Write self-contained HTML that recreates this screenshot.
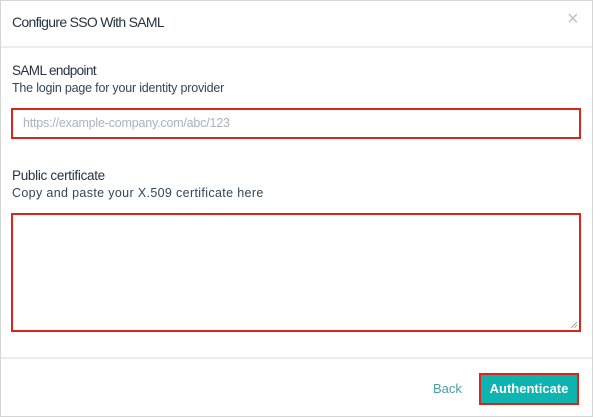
<!DOCTYPE html>
<html><head><style>
body{margin:0;width:593px;height:417px;background:#fff;font-family:"Liberation Sans",sans-serif;position:relative;overflow:hidden}
.frame{position:absolute;left:0;top:0;width:591px;height:415px;border:1px solid #d6d6d6}
.t{position:absolute;white-space:nowrap}
.line{position:absolute;left:1px;width:591px;height:2px;background:#ececec}
.box{position:absolute;border:2px solid #d8261c;box-sizing:border-box;background:#fff}
</style></head><body>
<div class="frame"></div>
<div class="t" style="left:12px;top:14px;font-size:14px;letter-spacing:-0.7px;color:#253342">Configure SSO With SAML</div>
<div class="t" style="left:567px;top:8px;font-size:20px;color:#b8c4cf">×</div>
<div class="line" style="top:46px"></div>
<div class="t" style="left:12px;top:63px;font-size:13.5px;letter-spacing:-0.6px;color:#253342">SAML endpoint</div>
<div class="t" style="left:12px;top:81px;font-size:12.5px;letter-spacing:-0.2px;color:#33475b">The login page for your identity provider</div>
<div class="box" style="left:11px;top:108px;width:570px;height:31px"></div>
<div class="t" style="left:23px;top:116px;font-size:12.5px;letter-spacing:-0.2px;color:#a9b3bd">https://example-company.com/abc/123</div>
<div class="t" style="left:12px;top:168px;font-size:13.5px;letter-spacing:-0.3px;color:#253342">Public certificate</div>
<div class="t" style="left:12px;top:186px;font-size:12.5px;letter-spacing:0.35px;color:#33475b">Copy and paste your X.509 certificate here</div>
<div class="box" style="left:11px;top:213px;width:570px;height:119px"></div>
<svg style="position:absolute;left:570px;top:321px" width="8" height="8"><path d="M1 7L7 1M4 7L7 4" stroke="#aaa" stroke-width="1"/></svg>
<div class="line" style="top:357px"></div>
<div class="t" style="left:433px;top:381px;font-size:13px;color:#4a9ea8">Back</div>
<div style="position:absolute;left:479px;top:373px;width:100px;height:32px;background:#0fb3b0;border:2px solid #d8261c;box-sizing:border-box;color:#fff;font-size:13px;font-weight:bold;text-align:center;line-height:28px">Authenticate</div>
</body></html>
